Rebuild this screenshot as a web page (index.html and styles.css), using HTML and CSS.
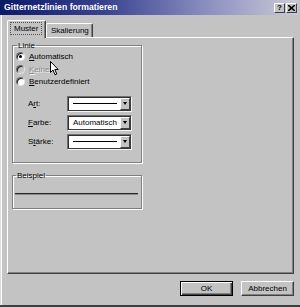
FILE: index.html
```html
<!DOCTYPE html>
<html lang="de">
<head>
<meta charset="utf-8">
<title>Gitternetzlinien formatieren</title>
<link rel="stylesheet" href="styles.css">
</head>
<body>
<div class="window">
  <div class="titlebar">
    <span class="title">Gitternetzlinien formatieren</span>
    <div class="caption-btns">
      <span class="cbtn help">?</span>
      <span class="cbtn close">
        <svg width="7" height="6" viewBox="0 0 7 6"><path d="M0 0 L7 6 M7 0 L0 6" stroke="#000" stroke-width="1.6"/></svg>
      </span>
    </div>
  </div>
  <div class="body">
    <div class="tabs">
      <div class="tab active"><span class="focus">Muster</span></div>
      <div class="tab">Skalierung</div>
    </div>
    <div class="panel">
      <fieldset class="group linie">
        <legend>Linie</legend>
        <div class="radio"><span class="rb checked"></span><span><u>A</u>utomatisch</span></div>
        <div class="radio disabled"><span class="rb"></span><span><u>K</u>eine</span></div>
        <div class="radio"><span class="rb"></span><span><u>B</u>enutzerdefiniert</span></div>
        <div class="rows">
          <div class="row"><span class="lbl">A<u>r</u>t:</span><div class="combo"><div class="val"><span class="line"></span></div><span class="drop"></span></div></div>
          <div class="row"><span class="lbl"><u>F</u>arbe:</span><div class="combo"><div class="val">Automatisch</div><span class="drop"></span></div></div>
          <div class="row"><span class="lbl">S<u>t</u>ärke:</span><div class="combo"><div class="val"><span class="line"></span></div><span class="drop"></span></div></div>
        </div>
      </fieldset>
      <fieldset class="group beispiel">
        <legend>Beispiel</legend>
        <div class="sample"></div>
      </fieldset>
    </div>
    <div class="footer">
      <button class="btn default">OK</button>
      <button class="btn">Abbrechen</button>
    </div>
  </div>
  <svg class="cursor" width="9" height="15" viewBox="0 0 9 15"><path d="M0.5 0.5 L0.5 11.5 L3 9 L5 13.8 L6.8 13 L4.8 8.5 L8.2 8.5 Z" fill="#fff" stroke="#000" stroke-width="1"/></svg>
</div>
</body>
</html>
```
FILE: styles.css
```css
html, body {
  margin: 0;
  padding: 0;
  background: #c3c3c3;
}
.window {
  position: relative;
  width: 300px;
  height: 307px;
  box-sizing: border-box;
  background: #c3c3c3;
  border-bottom: 2px solid #404040;
  font-family: "Liberation Sans", Arial, sans-serif;
  font-size: 8px;
  color: #000;
  display: flex;
  flex-direction: column;
}
.titlebar {
  height: 15px;
  margin-right: 2px;
  background: linear-gradient(to right, #0c1a68 0%, #3a4290 35%, #8c90c0 70%, #cacbd8 100%);
  display: flex;
  align-items: center;
  justify-content: space-between;
  padding-left: 4px;
}
.title {
  color: #fff;
  font-weight: bold;
  font-size: 8.7px;
  line-height: 15px;
  white-space: nowrap;
}
.caption-btns {
  display: flex;
  gap: 1px;
  margin-right: 1px;
}
.cbtn {
  width: 11px;
  height: 10px;
  box-sizing: border-box;
  background: #c3c3c3;
  border: 1px solid;
  border-color: #fff #404040 #404040 #fff;
  display: flex;
  align-items: center;
  justify-content: center;
  font-weight: bold;
  font-size: 8px;
  line-height: 8px;
}
.body {
  flex: 1;
  display: flex;
  flex-direction: column;
  box-shadow: inset 1px 0 0 #dcdcdc, inset 2px 0 0 #fff;
}
.tabs {
  display: flex;
  align-items: flex-end;
  margin-top: 5px;
  padding-left: 7px;
  height: 17px;
  position: relative;
  z-index: 1;
}
.tab {
  height: 14px;
  box-sizing: border-box;
  border-top: 1px solid #fff;
  border-left: 1px solid #fff;
  border-right: 1px solid #404040;
  box-shadow: inset -1px 0 0 #808080;
  border-radius: 2px 2px 0 0;
  padding: 0 4px;
  display: flex;
  align-items: center;
  white-space: nowrap;
  line-height: 9px;
  width: 47px;
}
.tab.active {
  height: 18px;
  width: 39px;
  margin-bottom: -1px;
  background: #c3c3c3;
  padding: 0 2px 2px 3px;
}
.focus {
  outline: 1px dotted #555;
  padding: 1px 3px 1px 3px;
}
.panel {
  margin-left: 7px;
  width: 287px;
  height: 237px;
  box-sizing: border-box;
  border-top: 1px solid #fff;
  border-left: 1px solid #fff;
  border-right: 1px solid #404040;
  border-bottom: 1px solid #404040;
  box-shadow: inset -1px -1px 0 #808080;
  display: flex;
  flex-direction: column;
}
.group {
  margin: 2.5px 0 0 4px;
  width: 130px;
  box-sizing: border-box;
  border: 1px solid #808080;
  box-shadow: 1px 1px 0 #fff, inset 1px 1px 0 #fff;
  min-inline-size: 0;
}
legend {
  padding: 0 1px;
  margin-left: 1px;
  line-height: 9px;
  font-size: 8px;
}
.linie {
  padding: 1px 0 12px 3px;
}
.radio {
  height: 12.4px;
  display: flex;
  align-items: center;
  gap: 4px;
  line-height: 9px;
}
.rb {
  width: 9px;
  height: 9px;
  box-sizing: border-box;
  border-radius: 50%;
  background: #fff;
  border: 1px solid;
  border-color: #6a6a6a #e8e8e8 #e8e8e8 #6a6a6a;
  box-shadow: inset 1px 1px 0 #202020;
  display: flex;
  align-items: center;
  justify-content: center;
}
.rb.checked::after {
  content: "";
  width: 3px;
  height: 3px;
  border-radius: 50%;
  background: #000;
}
.radio.disabled {
  color: #8c8c8c;
  text-shadow: 1px 1px 0 #f0f0f0;
}
.radio.disabled .rb {
  background: #c3c3c3;
}
.rows {
  margin-top: 8px;
  display: flex;
  flex-direction: column;
  gap: 3px;
}
.row {
  display: flex;
  align-items: center;
  height: 16px;
}
.lbl {
  margin-left: 12px;
  width: 39px;
  line-height: 9px;
}
.combo {
  width: 65px;
  height: 16px;
  box-sizing: border-box;
  background: #fff;
  border: 1px solid;
  border-color: #707070 #f4f4f4 #f4f4f4 #707070;
  box-shadow: inset 1px 1px 0 #303030, inset -1px -1px 0 #3a3a3a;
  display: flex;
  align-items: center;
  padding: 1px;
}
.val {
  flex: 1;
  display: flex;
  align-items: center;
  padding-left: 4px;
  padding-right: 3px;
  line-height: 9px;
  white-space: nowrap;
  overflow: hidden;
}
.line {
  display: block;
  flex: 1;
  height: 1px;
  background: #000;
}
.drop {
  width: 10px;
  height: 12px;
  box-sizing: border-box;
  background: #c3c3c3;
  border: 1px solid;
  border-color: #fff #404040 #404040 #fff;
  display: flex;
  align-items: center;
  justify-content: center;
}
.drop::after {
  content: "";
  width: 0;
  height: 0;
  border-left: 2.5px solid transparent;
  border-right: 2.5px solid transparent;
  border-top: 3px solid #000;
}
.beispiel {
  margin-top: 8px;
  padding: 13px 3px 13px 2px;
}
.sample {
  height: 1px;
  background: #2a2a2a;
  border-bottom: 1px solid #8a8a8a;
}
.footer {
  display: flex;
  justify-content: flex-end;
  gap: 8px;
  padding: 7px 6px 0 0;
}
.btn {
  width: 53px;
  height: 15px;
  box-sizing: border-box;
  margin: 0;
  padding: 0;
  background: #c3c3c3;
  font-family: "Liberation Sans", Arial, sans-serif;
  font-size: 8px;
  line-height: 9px;
  color: #000;
  border: 1px solid;
  border-color: #fff #404040 #404040 #fff;
  box-shadow: inset -1px -1px 0 #808080;
}
.btn.default {
  border: 1px solid #000;
  box-shadow: inset 1px 1px 0 #fff, inset -1px -1px 0 #404040, inset -2px -2px 0 #808080;
}
.cursor {
  position: absolute;
  left: 50px;
  top: 61px;
}
```
